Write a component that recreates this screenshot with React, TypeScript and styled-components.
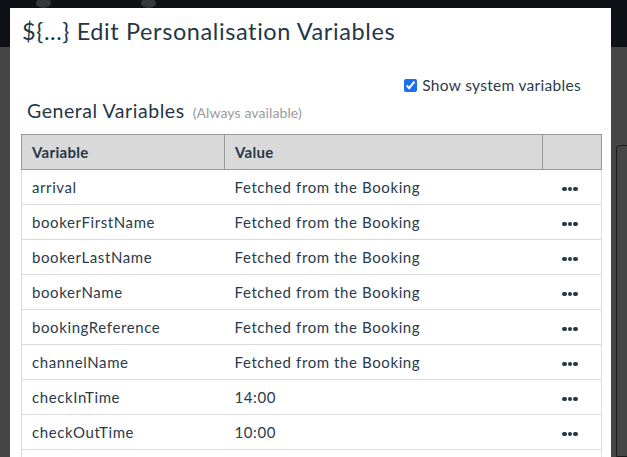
import React from "react";
import styled, { createGlobalStyle } from "styled-components";

const GlobalStyle = createGlobalStyle`
  html, body { margin: 0; padding: 0; }
  body { background: #454545; font-family: Lato, "Open Sans", sans-serif; }
`;

const Page = styled.div`
  position: relative;
  width: 627px;
  height: 457px;
  overflow: hidden;
  background: #454545;
  display: flex;
  flex-direction: column;
`;

const NavBar = styled.div`
  height: 47px;
  background: #0e1115;
  flex-shrink: 0;
  display: flex;
  align-items: flex-start;
  gap: 90px;
  padding-left: 36px;
`;

const NavIcon = styled.div`
  width: 15px;
  height: 10px;
  margin-top: -2px;
  border-radius: 50%;
  background: #35383d;
`;

const Backdrop = styled.div`
  flex: 1;
  display: flex;
  justify-content: flex-end;
  padding-top: 98px;
`;

const SidePanel = styled.div`
  width: 40px;
  margin-right: -31px;
  border: 1px solid #1c1c1c;
  border-radius: 4px 4px 0 0;
  background: #474747;
`;

const Modal = styled.div`
  position: absolute;
  left: 10px;
  top: 8px;
  width: 601px;
  height: 460px;
  overflow: hidden;
  background: #ffffff;
  padding: 0 10px 0 11px;
  box-sizing: border-box;
  color: #2a3a4a;
`;

const Title = styled.h1`
  margin: 0;
  padding: 9px 0 0 1px;
  font-size: 23.5px;
  font-weight: 400;
  line-height: 28px;
  letter-spacing: 0.6px;
  color: #253746;
`;

const OptionRow = styled.label`
  display: flex;
  justify-content: flex-end;
  align-items: center;
  gap: 5px;
  margin-top: 31px;
  padding-right: 20px;
  font-size: 15.5px;
  letter-spacing: 0.3px;
  line-height: 18px;
  color: #2c3b4a;
`;

const Check = styled.input`
  width: 13px;
  height: 13px;
  margin: 0;
  accent-color: #1a6ef5;
`;

const SectionHeading = styled.h2`
  margin: 0;
  padding: 5px 0 0 6px;
  font-size: 19.5px;
  font-weight: 400;
  letter-spacing: 0.55px;
  line-height: 24px;
  display: flex;
  align-items: baseline;
  gap: 8px;
  color: #253746;
`;

const Hint = styled.span`
  font-size: 14px;
  letter-spacing: 0.1px;
  color: #9a9a9a;
`;

const Table = styled.table`
  margin-top: 9px;
  width: 580px;
  border-collapse: collapse;
  table-layout: fixed;
  font-size: 15px;
  letter-spacing: 0.6px;
`;

const HeadCell = styled.th<{ $w: number }>`
  width: ${(p) => p.$w}px;
  height: 35px;
  box-sizing: border-box;
  background: #d9d9d9;
  border: 1px solid #999999;
  text-align: left;
  padding: 0 10px;
  font-weight: 700;
  font-size: 15px;
  letter-spacing: 0.3px;
  color: #253746;
`;

const Cell = styled.td`
  height: 35px;
  box-sizing: border-box;
  border: 1px solid #dcdcdc;
  border-left: none;
  border-right: none;
  padding: 0 10px;
  white-space: nowrap;
  &:first-child { border-left: 1px solid #dcdcdc; }
  &:last-child { border-right: 1px solid #dcdcdc; }
`;

const ActionCell = styled(Cell)`
  text-align: center;
  padding: 0 4px 0 0;
`;

const Dots = styled.span`
  display: inline-flex;
  gap: 1px;
  vertical-align: middle;
`;

const Dot = styled.span`
  width: 4.5px;
  height: 4.5px;
  border-radius: 50%;
  background: #253746;
`;

const rows: [string, string][] = [
  ["arrival", "Fetched from the Booking"],
  ["bookerFirstName", "Fetched from the Booking"],
  ["bookerLastName", "Fetched from the Booking"],
  ["bookerName", "Fetched from the Booking"],
  ["bookingReference", "Fetched from the Booking"],
  ["channelName", "Fetched from the Booking"],
  ["checkInTime", "14:00"],
  ["checkOutTime", "10:00"],
  ["", ""],
];

export default function App() {
  return (
    <>
      <GlobalStyle />
      <Page>
        <NavBar>
          <NavIcon />
          <NavIcon />
        </NavBar>
        <Backdrop>
          <SidePanel />
        </Backdrop>
        <Modal>
          <Title>{"${...} Edit Personalisation Variables"}</Title>
          <OptionRow>
            <Check type="checkbox" defaultChecked />
            Show system variables
          </OptionRow>
          <SectionHeading>
            General Variables <Hint>(Always available)</Hint>
          </SectionHeading>
          <Table>
            <thead>
              <tr>
                <HeadCell $w={203}>Variable</HeadCell>
                <HeadCell $w={318}>Value</HeadCell>
                <HeadCell $w={59}></HeadCell>
              </tr>
            </thead>
            <tbody>
              {rows.map(([name, value], i) => (
                <tr key={i}>
                  <Cell>{name}</Cell>
                  <Cell>{value}</Cell>
                  <ActionCell>
                    {name && (
                      <Dots>
                        <Dot />
                        <Dot />
                        <Dot />
                      </Dots>
                    )}
                  </ActionCell>
                </tr>
              ))}
            </tbody>
          </Table>
        </Modal>
      </Page>
    </>
  );
}
